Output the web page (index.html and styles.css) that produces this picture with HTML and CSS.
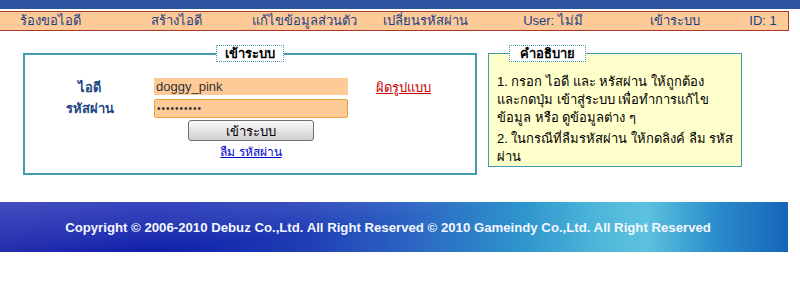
FILE: index.html
```html
<!DOCTYPE html>
<html lang="th">
<head>
<meta charset="UTF-8">
<title>เข้าระบบ</title>
<link rel="stylesheet" href="styles.css">
</head>
<body>

<div class="topbar"></div>

<div class="menu">
	<a href="#">ร้องขอไอดี</a>
	<a href="#">สร้างไอดี</a>
	<a href="#">แก้ไขข้อมูลส่วนตัว</a>
	<a href="#">เปลี่ยนรหัสผ่าน</a>
	<span>User: ไม่มี</span>
	<a href="#">เข้าระบบ</a>
	<span>ID: 1</span>
</div>

<div class="main">
	<fieldset class="login">
		<legend>เข้าระบบ</legend>
		<div class="form">
			<label class="lbl" for="uid">ไอดี</label>
			<input type="text" id="uid" class="txt one" value="doggy_pink">
			<a href="#" class="err">ผิดรูปแบบ</a>

			<label class="lbl" for="pwd">รหัสผ่าน</label>
			<input type="password" id="pwd" class="txt two" value="1234567890">
			<span></span>

			<span></span>
			<div class="act">
				<input type="button" class="btn" value="เข้าระบบ">
				<a href="#" class="forgot">ลืม รหัสผ่าน</a>
			</div>
		</div>
	</fieldset>

	<fieldset class="help">
		<legend>คำอธิบาย</legend>
		<p>1. กรอก ไอดี และ หรัสผ่าน ให้ถูกต้อง<br>และกดปุ่ม เข้าสู่ระบบ เพื่อทำการแก้ไข<br>ข้อมูล หรือ ดูข้อมูลต่าง ๆ</p>
		<p>2. ในกรณีที่ลืมรหัสผ่าน ให้กดลิงค์ ลืม รหัส<br>ผ่าน</p>
	</fieldset>
</div>

<div class="footer">
	Copyright © 2006-2010 Debuz Co.,Ltd. All Right Reserved © 2010 Gameindy Co.,Ltd. All Right Reserved
</div>

</body>
</html>
```

FILE: styles.css
```css
*{ margin:0; padding:0; box-sizing:border-box; }
body{
	background:#fff;
	font-family: Tahoma, "Liberation Sans", "Noto Sans", sans-serif;
	font-size:13px;
	color:#000;
}
.topbar{
	height:9px;
	background:#2d54a0;
}
.menu{
	margin-top:2px;
	width:789px;
	height:20px;
	background:#fecb98;
	border:1px solid #a6392b;
	border-left:none;
	display:grid;
	grid-template-columns:100px 152px 96px 154px 102px 142px 34px;
	align-items:center;
}
.menu a, .menu span{
	text-align:center;
	color:#1d3f86;
	text-decoration:none;
	white-space:nowrap;
	line-height:18px;
}
.main{
	display:flex;
	align-items:flex-start;
	margin-top:14px;
}
fieldset legend{
	font-weight:bold;
	font-size:13px;
	line-height:15px;
	background:#fff;
	border:1px dotted #3f9cb1;
}
.login{
	margin-left:23px;
	width:454px;
	height:130px;
	border:2px solid #3f9cb1;
	padding:15px 0 0 0;
}
.login legend{
	margin:0 auto;
	padding:0 8px;
}
.form{
	display:grid;
	grid-template-columns:129px 194px auto;
	align-items:center;
}
.lbl{
	text-align:center;
	font-weight:bold;
	color:#1b4585;
}
.txt{
	width:194px;
	font-family:"Liberation Sans", Arial, sans-serif;
	font-size:13px;
	color:#333;
	background:#fecb98;
	outline:none;
	padding:0 2px;
}
.txt.one{
	height:17px;
	border:none;
	margin-bottom:2px;
}
.txt.two{
	height:19px;
	border:1px solid #e8a33e;
	border-radius:2px;
	font-size:10px;
	letter-spacing:1px;
}
.err{
	justify-self:start;
	margin-left:28px;
	color:#cc0000;
}
.act{
	display:flex;
	flex-direction:column;
	align-items:center;
	padding-top:1px;
}
.btn{
	width:126px;
	height:21px;
	font-family:inherit;
	font-size:13px;
	color:#000;
	background:linear-gradient(#fafafa, #e4e4e4 50%, #cfcfcf);
	border:1px solid #707070;
	border-radius:3px;
}
.forgot{
	margin-top:1px;
	font-size:12px;
	color:#0000cc;
}
.help{
	margin-left:11px;
	width:250px;
	height:122px;
	background:#ffffcc;
	border:1px solid #3f9cb1;
	padding:11px 8px 0 8px;
}
.help legend{
	margin-left:12px;
	padding:0 10px;
}
.help p{
	line-height:18px;
	margin-bottom:3px;
	white-space:nowrap;
}
.footer{
	margin-top:27px;
	width:788px;
	height:50px;
	padding-right:12px;
	display:flex;
	align-items:center;
	justify-content:center;
	font-family:"Liberation Sans", Arial, sans-serif;
	font-weight:bold;
	font-size:13.2px;
	color:#f4f6ff;
	background:
		linear-gradient(172deg, rgba(140,150,230,.45) 0, rgba(140,150,230,.2) 30%, rgba(255,255,255,0) 45%),
		linear-gradient(90deg, #0a14a0 0%, #0c1ca8 18%, #1f3cb4 38%, #2c64c2 52%, #2d94cc 66%, #4fb6da 76%, #5cc2de 82%, #2a8ccc 91%, #1665b8 100%);
}
```
